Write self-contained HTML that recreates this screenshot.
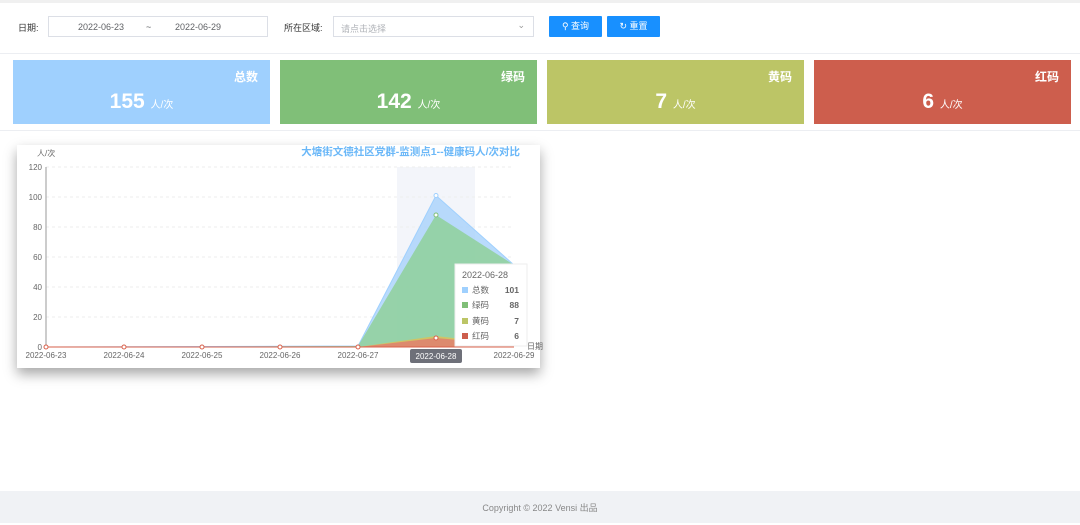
<!DOCTYPE html>
<html><head><meta charset="utf-8"><style>
*{margin:0;padding:0;box-sizing:border-box}
body{width:1080px;height:523px;overflow:hidden;background:#fff;font-family:"Liberation Sans","Noto Sans CJK SC",sans-serif;position:relative;color:#333}
.top{position:absolute;left:0;top:0;width:1080px;height:3px;background:#f0f0f0}
.lbl{position:absolute;font-size:9px;color:#333}
.box{position:absolute;border:1px solid #dcdfe6;background:#fff;font-size:9px;color:#606266}
.btn{position:absolute;background:#1890ff;color:#fff;font-size:9px;height:21px;line-height:21px;text-align:center;border-radius:1px}
.hr{position:absolute;left:0;width:1080px;height:1px;background:#eceef2}
.card{position:absolute;top:60px;width:257px;height:64px;color:#fff}
.card .t{position:absolute;right:12px;top:8px;font-size:12px;font-weight:bold}
.card .v{position:absolute;left:0;right:0;top:30px;text-align:center;font-size:21px;font-weight:bold}
.card .v span{font-size:10px;font-weight:normal}
.chart{position:absolute;left:17px;top:145px;width:523px;height:223px;background:#fff;box-shadow:0 6px 12px rgba(0,0,0,.35)}
.foot{position:absolute;left:0;top:491px;width:1080px;height:32px;background:#f0f2f5;text-align:center;line-height:34px;font-size:9px;color:#888}
</style></head><body>
<div class="top"></div>
<div class="lbl" style="left:18px;top:21px">日期:</div>
<div class="box" style="left:48px;top:16px;width:220px;height:21px">
<span style="position:absolute;left:29px;top:5px">2022-06-23</span>
<span style="position:absolute;left:97px;top:5px">~</span>
<span style="position:absolute;left:126px;top:5px">2022-06-29</span></div>
<div class="lbl" style="left:284px;top:21px">所在区域:</div>
<div class="box" style="left:333px;top:16px;width:201px;height:21px;color:#b0b3b8"><span style="position:absolute;left:7px;top:5px">请点击选择</span><span style="position:absolute;right:8px;top:3px;color:#999">⌄</span></div>
<div class="btn" style="left:549px;top:16px;width:53px">&#9906; 查询</div>
<div class="btn" style="left:607px;top:16px;width:53px">↻ 重置</div>
<div class="hr" style="top:53px"></div>
<div class="card" style="left:13px;background:#9fd0fe"><div class="t">总数</div><div class="v">155 <span>人/次</span></div></div>
<div class="card" style="left:280px;background:#80bf78"><div class="t">绿码</div><div class="v">142 <span>人/次</span></div></div>
<div class="card" style="left:547px;background:#bcc566"><div class="t">黄码</div><div class="v">7 <span>人/次</span></div></div>
<div class="card" style="left:814px;background:#cd5e4d"><div class="t">红码</div><div class="v">6 <span>人/次</span></div></div>
<div class="hr" style="top:130px"></div>
<div class="chart"></div>
<svg style="position:absolute;left:0;top:0" width="1080" height="523" font-family="Liberation Sans, Noto Sans CJK SC, sans-serif">
<text x="37" y="156" font-size="8" fill="#666">人/次</text>
<text x="520" y="155" font-size="10.5" font-weight="bold" fill="#6bb8f8" text-anchor="end">大塘街文德社区党群-监测点1--健康码人/次对比</text>
<rect x="397" y="167" width="78" height="180" fill="#f3f5fa"/>
<g stroke="#eee" stroke-dasharray="3,3"><line x1="46" x2="514" y1="167" y2="167"/><line x1="46" x2="514" y1="197" y2="197"/><line x1="46" x2="514" y1="227" y2="227"/><line x1="46" x2="514" y1="257" y2="257"/><line x1="46" x2="514" y1="287" y2="287"/><line x1="46" x2="514" y1="317" y2="317"/></g>
<g font-size="8" fill="#666" text-anchor="end"><text x="42" y="170">120</text><text x="42" y="200">100</text><text x="42" y="230">80</text><text x="42" y="260">60</text><text x="42" y="290">40</text><text x="42" y="320">20</text><text x="42" y="350">0</text></g>
<line x1="46" y1="167" x2="46" y2="347" stroke="#999"/>
<polygon points="46,347 358,346 436,195.5 514,265 514,347" fill="#a8d2fb" opacity=".8"/>
<polyline points="46,347 358,346 436,195.5 514,265" fill="none" stroke="#9fd0fe"/>
<polygon points="46,347 358,346 436,215 514,265 514,347" fill="#8fd09a" opacity=".85"/>
<polygon points="46,347 358,347 436,336 514,345 514,347" fill="#cfc466"/>
<polygon points="46,347 358,347 436,338 514,345 514,347" fill="#dd8a6e"/>
<line x1="46" y1="347" x2="514" y2="347" stroke="#d9604a"/>
<g fill="#fff" stroke="#d9604a"><circle cx="46" cy="347" r="2"/><circle cx="124" cy="347" r="2"/><circle cx="202" cy="347" r="2"/><circle cx="280" cy="347" r="2"/><circle cx="358" cy="347" r="2"/><circle cx="436" cy="338" r="2"/></g>
<circle cx="436" cy="195.5" r="2" fill="#fff" stroke="#9fd0fe"/><circle cx="436" cy="215" r="2" fill="#fff" stroke="#80bf78"/>
<g font-size="8" fill="#666" text-anchor="middle"><text x="46" y="358">2022-06-23</text><text x="124" y="358">2022-06-24</text><text x="202" y="358">2022-06-25</text><text x="280" y="358">2022-06-26</text><text x="358" y="358">2022-06-27</text><text x="514" y="358">2022-06-29</text></g>
<rect x="410" y="349" width="52" height="14" rx="2" fill="#6e7079"/><text x="436" y="359" font-size="8" fill="#fff" text-anchor="middle">2022-06-28</text>
<rect x="455" y="264" width="72" height="82" fill="#fff" stroke="#eee"/>
<text x="462" y="278" font-size="9" fill="#666">2022-06-28</text>
<g font-size="8.5" fill="#666"><rect x="462" y="287" width="6" height="6" fill="#9fd0fe"/><text x="472" y="293">总数</text><text x="519" y="293" text-anchor="end" font-weight="bold">101</text>
<rect x="462" y="302" width="6" height="6" fill="#80bf78"/><text x="472" y="308">绿码</text><text x="519" y="308" text-anchor="end" font-weight="bold">88</text>
<rect x="462" y="318" width="6" height="6" fill="#bcc566"/><text x="472" y="324">黄码</text><text x="519" y="324" text-anchor="end" font-weight="bold">7</text>
<rect x="462" y="333" width="6" height="6" fill="#cd5e4d"/><text x="472" y="339">红码</text><text x="519" y="339" text-anchor="end" font-weight="bold">6</text></g>
<text x="527" y="349" font-size="8" fill="#666">日期</text>
</svg>
<div class="foot">Copyright © 2022 Vensi 出品</div>
</body></html>
